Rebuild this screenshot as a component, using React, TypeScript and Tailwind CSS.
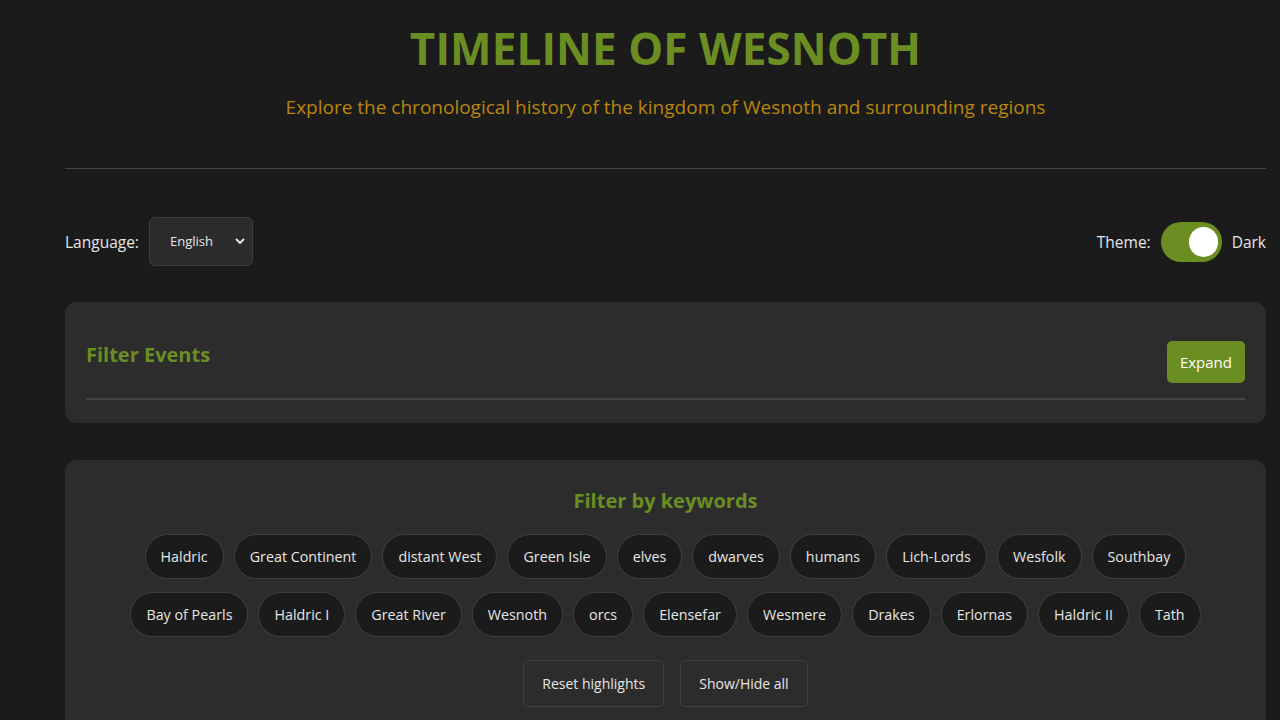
import React from "react";

const row1 = ["Haldric", "Great Continent", "distant West", "Green Isle", "elves", "dwarves", "humans", "Lich-Lords", "Wesfolk", "Southbay"];
const row2 = ["Bay of Pearls", "Haldric I", "Great River", "Wesnoth", "orcs", "Elensefar", "Wesmere", "Drakes", "Erlornas", "Haldric II", "Tath"];

export default function App() {
  return (
    <div
      className="min-h-screen bg-[#1b1b1b] text-[#e6e6e6] pl-[65px] pr-[14px]"
      style={{ fontFamily: '"Open Sans", "Noto Sans", sans-serif' }}
    >
      <header className="flex flex-col items-center pt-[22px] pb-[48px] border-b border-[#454545]">
        <h1 className="text-[44px] leading-[52px] font-bold tracking-[0.1px] text-[#6b8e23]">TIMELINE OF WESNOTH</h1>
        <p className="mt-[20px] text-[19px] leading-[26px] text-[#b8860b]">
          Explore the chronological history of the kingdom of Wesnoth and surrounding regions
        </p>
      </header>

      <div className="flex items-center justify-between mt-[48px] h-[48px]">
        <div className="flex items-center gap-[10px]">
          <span className="text-[15.5px] pt-[4px]">Language:</span>
          <div className="w-[104px] h-[49px] rounded-[6px] bg-[#2b2b2b] border border-[#3d3d3d] flex items-center justify-between pl-[20px] pr-[6px]">
            <span className="text-[13px] pt-[2px]">English</span>
            <svg width="12" height="12" viewBox="0 0 12 12" className="text-[#e6e6e6]">
              <path d="M2.5 4.5 L6 8 L9.5 4.5" fill="none" stroke="currentColor" strokeWidth="2" strokeLinecap="round" strokeLinejoin="round" />
            </svg>
          </div>
        </div>
        <div className="flex items-center gap-[10px] pt-[2px]">
          <span className="text-[15.5px] pt-[2px]">Theme:</span>
          <div className="w-[61px] h-[40px] rounded-full bg-[#6b8e23] flex items-center justify-end pr-[4px]">
            <div className="w-[29px] h-[30px] rounded-full bg-white" />
          </div>
          <span className="text-[15.5px] pt-[2px]">Dark</span>
        </div>
      </div>

      <section className="mt-[37px] rounded-[12px] bg-[#2c2c2c] px-[21px] pt-[39px] pb-[23px]">
        <div className="flex items-start justify-between pb-[15px] border-b-2 border-[#444]">
          <h2 className="text-[20px] leading-[28px] font-bold text-[#6b8e23]">Filter Events</h2>
          <button className="h-[42px] px-[13px] rounded-[5px] bg-[#6b8e23] text-white text-[15px]">Expand</button>
        </div>
      </section>

      <section className="mt-[37px] rounded-[12px] bg-[#2c2c2c] pt-[26px] pb-[40px] px-[21px]">
        <h2 className="text-center text-[20px] leading-[30px] font-bold text-[#6b8e23]">Filter by keywords</h2>
        <div className="mt-[18px] flex flex-col items-center gap-[13px]">
          {[row1, row2].map((row, i) => (
            <div key={i} className="flex justify-center gap-[10px]">
              {row.map((k) => (
                <span
                  key={k}
                  className="h-[45px] px-[15px] rounded-full bg-[#1b1b1b] border border-[#3f3f3f] flex items-center text-[14.3px] text-[#e6e6e6] whitespace-nowrap"
                >
                  {k}
                </span>
              ))}
            </div>
          ))}
        </div>
        <div className="mt-[23px] flex justify-center gap-[16px]">
          <button className="h-[47px] px-[18px] rounded-[5px] border border-[#3f3f3f] text-[14px] text-[#e6e6e6]">Reset highlights</button>
          <button className="h-[47px] px-[18px] rounded-[5px] border border-[#3f3f3f] text-[14px] text-[#e6e6e6]">Show/Hide all</button>
        </div>
      </section>
    </div>
  );
}
